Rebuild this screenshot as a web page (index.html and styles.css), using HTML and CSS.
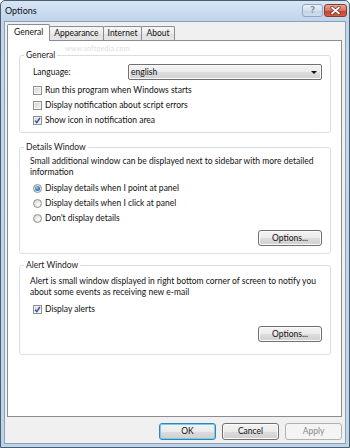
FILE: index.html
```html
<!DOCTYPE html>
<html>
<head>
<meta charset="utf-8">
<title>Options</title>
<link rel="stylesheet" href="styles.css">
</head>
<body>
<div class="window">
  <div class="titlebar">
    <span class="title">Options</span>
    <div class="caption-buttons">
      <span class="cap-btn help">?</span>
      <span class="cap-btn close">
        <svg width="11" height="9" viewBox="0 0 11 9"><path d="M2 1.5 L9 7.5 M9 1.5 L2 7.5" stroke="#6b2a20" stroke-width="3.2" stroke-linecap="round"/><path d="M2 1.5 L9 7.5 M9 1.5 L2 7.5" stroke="#ffffff" stroke-width="1.8" stroke-linecap="round"/></svg>
      </span>
    </div>
  </div>
  <div class="client">
    <div class="tabs">
      <div class="tab active">General</div>
      <div class="tab">Appearance</div>
      <div class="tab">Internet</div>
      <div class="tab">About</div>
    </div>
    <div class="panel">
      <fieldset class="group group-general">
        <legend>General</legend>
        <div class="lang-row">
          <span class="lang-label">Language:</span>
          <div class="combo"><span class="combo-text">english</span><span class="combo-arrow"></span></div>
        </div>
        <div class="options">
          <div class="option"><span class="box"></span><span>Run this program when Windows starts</span></div>
          <div class="option"><span class="box"></span><span>Display notification about script errors</span></div>
          <div class="option"><span class="box checked"><svg width="7" height="7" viewBox="0 0 7 7"><path d="M1 3.6 L2.8 5.6 L6 0.8" fill="none" stroke="#2f4f9f" stroke-width="1.4"/></svg></span><span>Show icon in notification area</span></div>
        </div>
      </fieldset>

      <fieldset class="group group-details">
        <legend>Details Window</legend>
        <p class="desc">Small additional window can be displayed next to sidebar with more detailed<br>information</p>
        <div class="options radios">
          <div class="option"><span class="radio selected"></span><span>Display details when I point at panel</span></div>
          <div class="option"><span class="radio"></span><span>Display details when I click at panel</span></div>
          <div class="option"><span class="radio"></span><span>Don't display details</span></div>
        </div>
        <div class="btn-row"><span class="btn">Options...</span></div>
      </fieldset>

      <fieldset class="group group-alert">
        <legend>Alert Window</legend>
        <p class="desc">Alert is small window displayed in right bottom corner of screen to notify you<br>about some events as receiving new e-mail</p>
        <div class="options alert-options">
          <div class="option"><span class="box checked"><svg width="7" height="7" viewBox="0 0 7 7"><path d="M1 3.6 L2.8 5.6 L6 0.8" fill="none" stroke="#2f4f9f" stroke-width="1.4"/></svg></span><span>Display alerts</span></div>
        </div>
        <div class="btn-row alert-btn-row"><span class="btn">Options...</span></div>
      </fieldset>
    </div>
    <div class="dialog-buttons">
      <span class="btn dlg default">OK</span>
      <span class="btn dlg">Cancel</span>
      <span class="btn dlg disabled">Apply</span>
    </div>
  </div>
  <div class="watermark">www.softpedia.com</div>
</div>
</body>
</html>
```
FILE: styles.css
```css
* { box-sizing: border-box; }
html, body { margin: 0; padding: 0; }
body {
  width: 350px;
  height: 448px;
  overflow: hidden;
  font-family: "Lato", "Open Sans", sans-serif;
  font-size: 8.5px;
  line-height: 11px;
  color: #111;
}
.window {
  position: relative;
  width: 350px;
  height: 448px;
  border: 1px solid #4c5d70;
  border-radius: 5px 5px 0 0;
  background: linear-gradient(#d6e5f5 0px, #bfd4ec 20px, #c3d8ee 60px, #bdd3ea 100%);
  display: flex;
  flex-direction: column;
}
.titlebar {
  height: 20px;
  flex: none;
  display: flex;
  justify-content: space-between;
  padding: 3px 2px 0 4px;
}
.title {
  font-size: 9px;
  line-height: 13px;
  color: #111;
  padding-top: 0px;
}
.caption-buttons { display: flex; gap: 1px; }
.cap-btn {
  height: 13px;
  border-radius: 3px;
  display: flex;
  align-items: center;
  justify-content: center;
}
.help {
  width: 21px;
  border: 1px solid #8ea7c5;
  background: linear-gradient(#e9f0f8, #d4e0ee 50%, #c3d3e6 51%, #cddcee);
  color: #7f93ab;
  font-family: "DejaVu Sans", sans-serif;
  font-weight: bold;
  font-size: 9px;
  text-shadow: 0 0 1px #fff;
}
.close {
  width: 23px;
  border: 1px solid #8a3b30;
  background: linear-gradient(#e8a799, #d6705e 50%, #c2412d 51%, #d55d44);
}
.client {
  flex: 1;
  margin: 0 3px 3px 3px;
  border: 1px solid #8d9fb3;
  background: #f0f0f0;
  display: flex;
  flex-direction: column;
  padding: 0 3px 3px 2px;
}
.tabs {
  height: 18px;
  flex: none;
  display: flex;
  align-items: flex-end;
  position: relative;
  z-index: 1;
}
.tab {
  height: 14px;
  border: 1px solid #898c95;
  border-bottom: none;
  margin-left: -1px;
  padding: 0 4px;
  line-height: 12px;
  background: linear-gradient(#f6f6f6, #ececec 50%, #e0e0e0 51%, #e6e6e6);
  color: #111;
  border-radius: 2px 2px 0 0;
}
.tab.active {
  height: 17px;
  margin-bottom: -1px;
  margin-left: 0;
  background: #fff;
  padding: 0 6px;
  line-height: 14px;
}
.panel {
  flex: 1;
  background: #fff;
  border: 1px solid #898c95;
  padding: 9px 10px 0 11px;
}
.group {
  margin: 0;
  border: 1px solid #d5dfe5;
  border-radius: 3px;
  padding: 3px 7px 4px 4px;
  min-width: 0;
}
.group legend {
  padding: 0 2px;
  line-height: 11px;
  color: #1b1b1b;
}
.group-details { margin-top: 9px; padding-bottom: 7px; }
.group-alert { margin-top: 6px; padding-top: 5px; padding-bottom: 12px; }
.lang-row {
  display: flex;
  align-items: center;
  height: 16px;
}
.lang-label {
  flex: 0 0 95px;
  margin-left: 9px;
}
.combo {
  flex: 1;
  height: 16px;
  margin-right: 1px;
  border: 1px solid #707070;
  border-radius: 2px;
  background: linear-gradient(#f4f4f4, #ebebeb 50%, #dddddd 51%, #d2d2d2);
  box-shadow: inset 0 0 0 1px #fafafa;
  display: flex;
  align-items: center;
  justify-content: space-between;
  padding: 0 4px 0 2px;
}
.combo-arrow {
  width: 0;
  height: 0;
  border-left: 3px solid transparent;
  border-right: 3px solid transparent;
  border-top: 3px solid #111;
}
.options { margin-top: 3px; }
.option {
  height: 15px;
  display: flex;
  align-items: center;
  margin-left: 9px;
}
.box, .radio {
  flex: none;
  width: 9px;
  height: 9px;
  margin-right: 3px;
  display: flex;
  align-items: center;
  justify-content: center;
}
.box {
  border: 1px solid #8e8f8f;
  background: linear-gradient(135deg, #cfcfcf, #f7f7f7);
  box-shadow: inset 0 0 0 1px #f4f4f4;
}
.box.checked svg { display: block; }
.radio {
  border: 1px solid #8e8f8f;
  border-radius: 50%;
  background: radial-gradient(circle at 65% 65%, #fdfdfd, #d0d0d0);
}
.radio.selected::after {
  content: "";
  width: 5px;
  height: 5px;
  border-radius: 50%;
  background: radial-gradient(circle at 40% 35%, #8fd3f7, #2b6fc0 60%, #1b4f9a);
}
.desc {
  margin: 0 0 0 6px;
  line-height: 11px;
}
.radios { margin-top: 3px; }
.alert-options { margin-top: 4px; }
.btn-row {
  display: flex;
  justify-content: flex-end;
  margin-top: 4px;
  margin-right: 1px;
}
.alert-btn-row { margin-top: 9px; }
.btn {
  width: 64px;
  height: 16px;
  border: 1px solid #707070;
  border-radius: 3px;
  background: linear-gradient(#f3f3f3, #ebebeb 50%, #dddddd 51%, #cfcfcf);
  box-shadow: inset 0 0 0 1px #fbfbfb;
  display: flex;
  align-items: center;
  justify-content: center;
  color: #111;
}
.dialog-buttons {
  flex: none;
  display: flex;
  justify-content: flex-end;
  gap: 6px;
  margin-top: 6px;
}
.btn.dlg { width: 57px; height: 17px; }
.btn.default {
  border-color: #3c7fb1;
  box-shadow: inset 0 0 0 1px #6fd0f5;
}
.btn.disabled {
  border-color: #adb2b5;
  background: #f4f4f4;
  box-shadow: none;
  color: #8a8a8a;
}
.watermark {
  position: absolute;
  left: 64px;
  top: 43px;
  font-size: 7px;
  line-height: 9px;
  color: #dedede;
  letter-spacing: 0.2px;
}
```
